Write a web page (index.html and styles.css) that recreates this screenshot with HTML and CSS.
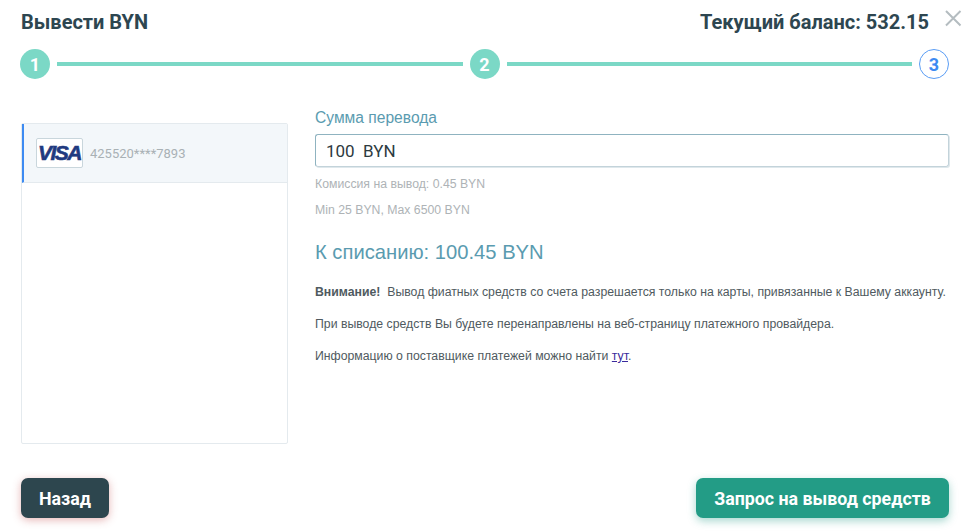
FILE: index.html
```html
<!DOCTYPE html>
<html>
<head>
<meta charset="utf-8">
<title>Вывести BYN</title>
<link rel="stylesheet" href="styles.css">
</head>
<body>
<div class="modal">
  <div class="head">
    <h2>Вывести BYN</h2>
    <div class="balance">Текущий баланс: 532.15</div>
    <svg class="close" width="18" height="18" viewBox="0 0 18 18"><path d="M2 2L16.500 16.500M16.500 2L2 16.500" stroke="#b4bcc0" stroke-width="2" fill="none"/></svg>
  </div>

  <div class="steps">
    <span class="step done">1</span>
    <span class="line"></span>
    <span class="step done">2</span>
    <span class="line"></span>
    <span class="step current">3</span>
  </div>

  <div class="body">
    <div class="cards">
      <div class="card">
        <span class="visa">VISA</span>
        <span class="number">425520****7893</span>
      </div>
    </div>
    <div class="form">
      <label class="label">Сумма перевода</label>
      <div class="input">100&nbsp; BYN</div>
      <p class="hint">Комиссия на вывод: 0.45 BYN</p>
      <p class="hint">Min 25 BYN, Max 6500 BYN</p>
      <div class="total">К списанию: 100.45 BYN</div>
      <p class="note"><b>Внимание!</b>&nbsp; Вывод фиатных средств со счета разрешается только на карты, привязанные к Вашему аккаунту.</p>
      <p class="note">При выводе средств Вы будете перенаправлены на веб-страницу платежного провайдера.</p>
      <p class="note">Информацию о поставщике платежей можно найти <a href="#">тут</a>.</p>
    </div>
  </div>

  <div class="foot">
    <button class="btn back">Назад</button>
    <button class="btn submit">Запрос на вывод средств</button>
  </div>
</div>
</body>
</html>
```

FILE: styles.css
```css
html, body { margin: 0; padding: 0; background: #fff; }
body { font-family: Roboto, "Liberation Sans", sans-serif; color: #2d4650; }

.modal { width: 969px; height: 531px; box-sizing: border-box; padding: 10px 20px 0 21px; overflow: hidden; }

.head { display: flex; align-items: center; height: 24px; }
.head h2 { margin: 0; font-size: 20px; font-weight: 700; flex: 1; }
.balance { font-size: 20px; font-weight: 700; }
.close { margin: -8px -13px 0 15px; }

.steps { display: flex; align-items: center; margin: 15px 0 0 -1px; }
.step { width: 30px; height: 30px; box-sizing: border-box; border-radius: 50%; display: flex; align-items: center; justify-content: center; padding-top: 1px; font-size: 18px; font-weight: 700; flex: none; }
.step.done { background: #7bd8c6; color: #fff; }
.step.current { border: 1px solid #5a9df5; color: #3d8bf2; }
.line { flex: 1; height: 4px; background: #7bd8c6; margin: 0 7px; }

.body { display: flex; margin-top: 30px; }
.cards { width: 267px; height: 321px; margin-top: 14px; box-sizing: border-box; border: 1px solid #e4eaee; border-radius: 2px; flex: none; }
.card { height: 59px; box-sizing: border-box; background: #f3f7fa; border-left: 2px solid #3d8bf2; border-bottom: 1px solid #e4eaee; display: flex; align-items: center; padding-left: 12px; }
.visa { width: 47px; height: 30px; box-sizing: border-box; background: #fff; border: 1px solid #c9d6dc; border-radius: 2px; font: italic 700 21px "Liberation Sans", sans-serif; color: #1f3a80; text-align: center; line-height: 28px; letter-spacing: -1.5px; -webkit-text-stroke: .6px #1f3a80; }
.number { margin-left: 7px; font-size: 13px; color: #a9b1b5; }

.form { flex: 1; margin-left: 27px; font-family: "Liberation Sans", sans-serif; }
.label { display: block; font-size: 15.6px; line-height: 18px; color: #5a9bb0; }
.input { margin-top: 7px; height: 33px; box-sizing: border-box; border: 1px solid #8fb3c0; border-right-color: #c3d3da; border-bottom-color: #c3d3da; box-shadow: 1px 1px 0 #dfe8ec; border-radius: 3px; padding-left: 10px; font: 17px/33px Roboto, sans-serif; color: #2d3a40; }
.hint { margin: 10px 0 0; font-size: 12.27px; line-height: 16px; color: #aeb3b6; }
.input + .hint { margin-top: 9px; }
.total { margin-top: 21px; font-size: 20.2px; line-height: 26px; color: #5a9bb0; }
.note { margin: 12px 0 0; font-size: 12.27px; line-height: 20px; color: #4f5a60; }
.total + .note { margin-top: 17px; }
.note a { color: #3a2a9c; text-decoration: underline; }

.foot { display: flex; justify-content: space-between; margin-top: 34px; }
.btn { height: 40px; border: 0; border-radius: 7px; color: #fff; font: 700 17.8px Roboto, sans-serif; }
.back { width: 88px; background: #2d464e; box-shadow: 0 2px 8px rgba(200, 90, 90, .45); }
.submit { width: 253px; background: #239c86; box-shadow: 0 3px 8px rgba(35, 156, 134, .4); }
```
